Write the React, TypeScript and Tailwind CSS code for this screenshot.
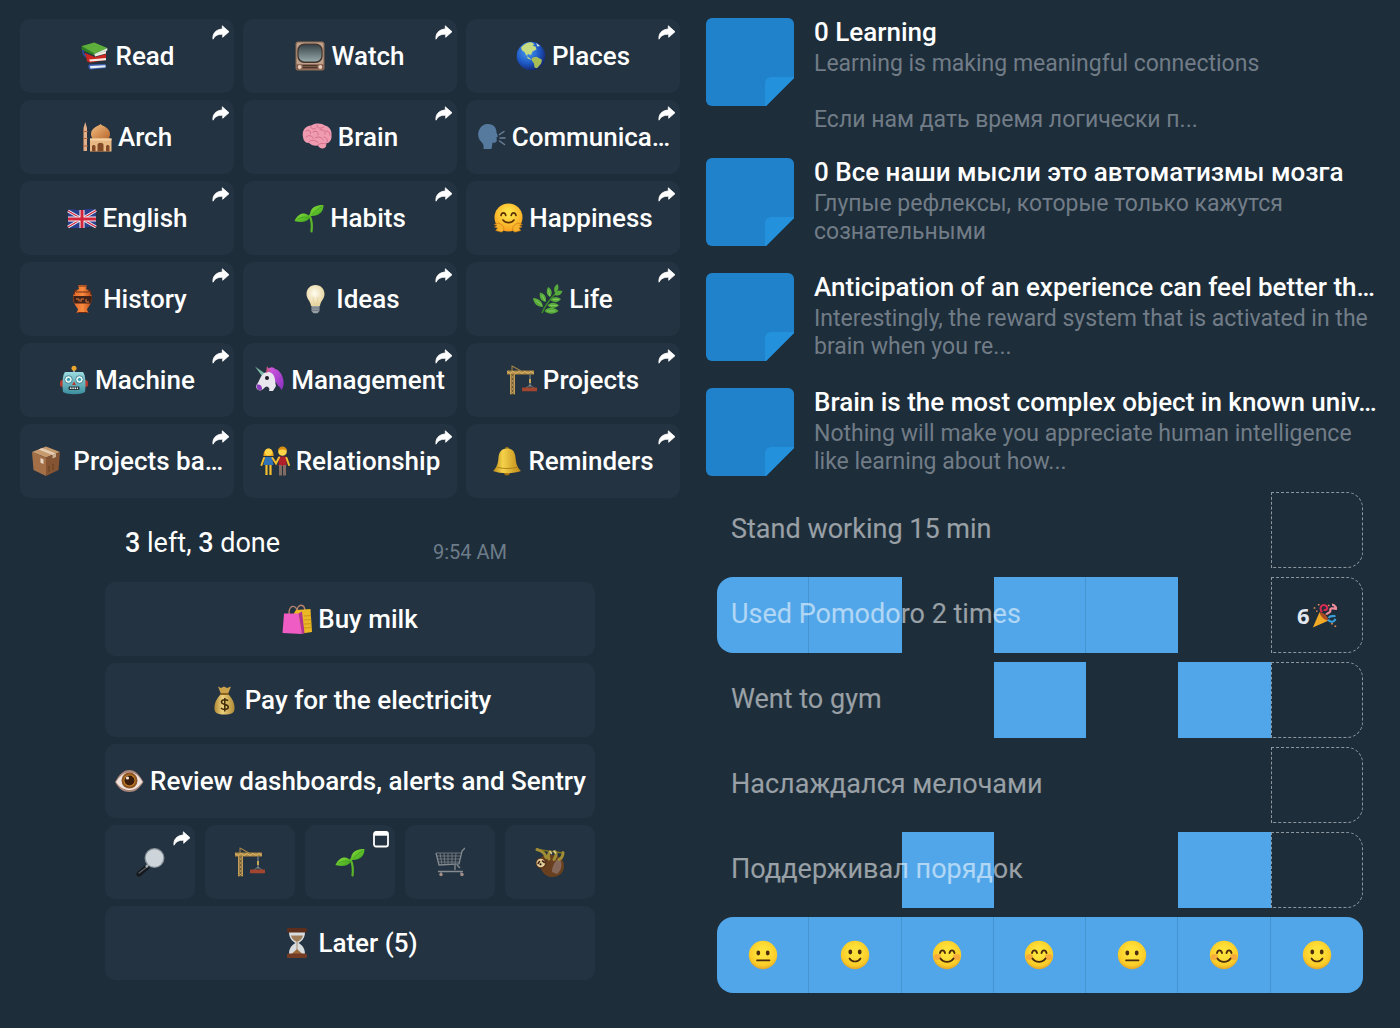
import React from "react";
import clsx from "clsx";

const Defs = () => (
  <svg className="absolute size-0" aria-hidden="true">
    <defs>
      <radialGradient id="face" cx="50%" cy="40%" r="60%">
        <stop offset="0.3" stopColor="#fee23a" />
        <stop offset="0.8" stopColor="#fbcb27" />
        <stop offset="1" stopColor="#dfa42b" />
      </radialGradient>
      <radialGradient id="hugFace" cx="50%" cy="35%" r="65%">
        <stop offset="0.2" stopColor="#ffdf45" />
        <stop offset="1" stopColor="#f89e1c" />
      </radialGradient>
      <radialGradient id="ocean" cx="38%" cy="35%" r="70%">
        <stop offset="0" stopColor="#4b9df0" />
        <stop offset="0.6" stopColor="#1d57c4" />
        <stop offset="1" stopColor="#14246b" />
      </radialGradient>
      <radialGradient id="glass" cx="45%" cy="40%" r="60%">
        <stop offset="0" stopColor="#fffdf0" />
        <stop offset="1" stopColor="#e6d29c" />
      </radialGradient>
      <linearGradient id="screen" x1="0" y1="0" x2="0" y2="1">
        <stop offset="0" stopColor="#38444a" />
        <stop offset="1" stopColor="#97a8a9" />
      </linearGradient>
      <linearGradient id="dome" x1="0" y1="0" x2="1" y2="1">
        <stop offset="0" stopColor="#f6c084" />
        <stop offset="1" stopColor="#b8692c" />
      </linearGradient>
      <linearGradient id="leaf" x1="0" y1="0" x2="1" y2="1">
        <stop offset="0" stopColor="#8ee23c" />
        <stop offset="1" stopColor="#35a01b" />
      </linearGradient>
      <linearGradient id="gold" x1="0" y1="0" x2="1" y2="0">
        <stop offset="0" stopColor="#b98718" />
        <stop offset="0.35" stopColor="#f5d24a" />
        <stop offset="1" stopColor="#bd8716" />
      </linearGradient>
      <linearGradient id="sack" x1="0" y1="0" x2="1" y2="0">
        <stop offset="0" stopColor="#b08a35" />
        <stop offset="0.4" stopColor="#ecd07c" />
        <stop offset="1" stopColor="#b08a35" />
      </linearGradient>
      <linearGradient id="robot" x1="0" y1="0" x2="0" y2="1">
        <stop offset="0" stopColor="#9bdbe0" />
        <stop offset="1" stopColor="#3b8d9d" />
      </linearGradient>
      <linearGradient id="clay" x1="0" y1="0" x2="1" y2="0">
        <stop offset="0" stopColor="#e0662a" />
        <stop offset="0.5" stopColor="#f98a3e" />
        <stop offset="1" stopColor="#b74818" />
      </linearGradient>
      <linearGradient id="mane" x1="0" y1="0" x2="1" y2="1">
        <stop offset="0" stopColor="#d75de0" />
        <stop offset="1" stopColor="#8a2fc0" />
      </linearGradient>
    </defs>
  </svg>
);

const drawings: Record<string, React.ReactNode> = {
  books: (
    <>
      <path d="M9 23.500l16.500-.5.500 4-16 1.500c-2-1.500-2-3.500-1-5Z" fill="#3f63b5" />
      <path d="M10 25l15.500-.8v2L10.500 27.500Z" fill="#e8eef5" />
      <path d="M5 12l10 4 11-3v6l-16 2.800C6.500 20.500 6 19 7 17.500 4.500 16 4 14 5 12Z" fill="#c9271f" />
      <path d="M9 18.500l17-1.500v2.200l-16 1.300Z" fill="#f4ece2" />
      <path d="M15 13.500l11-3.500v2.500l-11 3Z" fill="#f4ece2" />
      <path d="M1.700 5 14.300 1.500 27.300 7 14.300 13 3 8.500Z" fill="#5dae3a" />
      <path d="M1.700 5v4l12.600 5.500V12.500Z" fill="#2e7d26" />
      <path d="M14.300 13l13-6v2.500l-13 5Z" fill="#dcebd4" />
      <path d="M3 9c-.5 3 .5 5 3 6.500" fill="none" stroke="#2f4aa0" strokeWidth="1.500" />
    </>
  ),
  tv: (
    <>
      <rect x=".5" y=".5" width="29" height="29" rx="2.500" fill="#8d6a55" />
      <rect x="1.600" y="1.600" width="26.800" height="26.800" rx="2" fill="#bfa08a" />
      <rect x="2.300" y="2.500" width="25.400" height="19.500" rx="7" fill="#41352e" />
      <rect x="3.600" y="3.800" width="22.800" height="16.800" rx="6" fill="url(#screen)" />
      <path d="M1.500 23.300H28.500V28.500H1.500Z" fill="#7b5747" />
      <path d="M8 24.500H22M8 26.500H22" stroke="#4a342a" strokeWidth="1" />
      <circle cx="4.700" cy="26" r="2" fill="#e8cdb8" />
      <circle cx="25.300" cy="26" r="2" fill="#e8cdb8" />
    </>
  ),
  globe: (
    <>
      <circle cx="15" cy="15" r="14.300" fill="url(#ocean)" />
      <path d="M5 6.500C8 2.500 12 1 15.500 1.200l3 2-2 1.500 3 .8 1 3-4 2-1.500 3.500-3-1-1.500 2 3 2 2.500 2-4-1.200L8.500 11 6 9.500Z" fill="#c5dc83" />
      <path d="M16.500 16.500l4-.8 5.500 3-1 4-4 4.500-2.500-.7-.5-4-2.500-3.500Z" fill="#a9bd55" />
      <path d="M20 2l4 3-2.500.5Z" fill="#e5efd8" />
    </>
  ),
  mosque: (
    <>
      <path d="M3.300 0 5 6V29H1.500V6Z" fill="#e5ad86" />
      <path d="M1 9.500H5.800M1 16.500H5.800M1 24H5.800" stroke="#a9633f" strokeWidth="1.200" />
      <path d="M18.500 2c1.500 2 9.500 3.500 9.500 10 0 2.500-1 4-2 5H11c-1-1-2-2.500-2-5C9 5.500 17 4 18.500 2Z" fill="url(#dome)" />
      <path d="M8 16.500H29.500V29.500H8Z" fill="#e8b884" />
      <path d="M8 16.500H29.500v2H8Z" fill="#f6d3a4" />
      <path d="M15.500 29.500V23c0-3 6-3 6 0v6.500ZM10 29.500v-5c0-2 3.500-2 3.500 0v5ZM24 29.500v-5c0-2 3.500-2 3.500 0v5Z" fill="#824a26" />
    </>
  ),
  brain: (
    <>
      <path d="M1 15C-.5 8 4 4 9 3.500 13 .5 20 1 23 3.500c5 1.500 7 5.500 6.500 9.500.5 5-2 8-5.500 8.500 1 3-1 5-3.500 5-2.500 0-4-1.500-4.500-3-4 .5-7-.5-9-2.500C3.500 21 1.500 19 1 15Z" fill="#f09bb0" />
      <path d="M4 9c3-2 5 0 4.500 2.500M9 4c-1 3 3 4 5 2M15 3c0 4 5 4 7 1.500M4 15c2-2 6-2 7 1M11 10c3-2 6 0 5 3M18 8c3-1 6 1 5 4M13 16c3-2 7-1 8 2M24 9c2 0 4 1 4 4M7 20c2-3 6-2 9 .5M22 15c2 0 4 2 3 5M16 23c2-2 5-2 8-1" fill="none" stroke="#d3708c" strokeWidth="1" strokeLinecap="round" />
    </>
  ),
  speaking: (
    <>
      <path d="M11 2c6.500-.5 9.500 3.500 9.500 8.500L22 14.500l-1.500.8.3 3.200c0 2-2 2.500-4.300 2.300L15.500 27H7.500c.5-4-.5-5.500-3-8C-1 12 4 2.500 11 2Z" fill="#56799e" />
      <path d="M23.500 12.500l4.500-3M24 16h5M23.500 19l5 3.500" stroke="#6c8199" strokeWidth="1.500" strokeLinecap="round" />
    </>
  ),
  flag: (
    <>
      <path d="M1 7C6 5.500 10 8 15 7s9-1.500 14-.5V24c-5-1-9 .5-14 1S6 24 1 25Z" fill="#2b3f8f" />
      <path d="M1 8l28 16M29 7.500 1 24" stroke="#f2f2f5" strokeWidth="3" />
      <path d="M1 8l28 16M29 7.500 1 24" stroke="#d2253c" strokeWidth="1.200" />
      <path d="M15 7v18M1 16H29" stroke="#f2f2f5" strokeWidth="5" />
      <path d="M15 7v18M1 16H29" stroke="#d2253c" strokeWidth="3" />
    </>
  ),
  sprout: (
    <>
      <path d="M17.500 28.500C18.400 22 17.600 17 15.600 12.500" fill="none" stroke="#5bb52a" strokeWidth="2.200" strokeLinecap="round" />
      <path d="M16 14.500C12 8 4 10 .5 18c6.500 2 12.500 1.500 15.500-3.500Z" fill="url(#leaf)" />
      <path d="M16 13C15.500 4.500 22 2 29.500 2 29.500 9 25 13.500 16 13Z" fill="url(#leaf)" />
      <path d="M3 16.500c4-2.500 8-3 12-2M18 11.500c3-3 6-5.500 10-8" fill="none" stroke="#3f9a1e" strokeWidth=".7" />
    </>
  ),
  hug: (
    <>
      <circle cx="15.500" cy="14.500" r="14" fill="url(#hugFace)" />
      <path d="M8 12.500c.8-3.500 4-3.500 4.800 0M18.200 12.500c.8-3.500 4-3.500 4.800 0M10 17c2.500 3.500 8.500 3.500 11 0" fill="none" stroke="#5b3207" strokeWidth="1.600" strokeLinecap="round" />
      <path d="M1 21.500l3 1-2.500 1.500L4.500 25l-1.800 2.500L8 29c3 .5 4-5 1-7L6 20Z" fill="#f7b22c" stroke="#c27313" strokeWidth=".6" />
      <path d="M29.500 21.500l-3 1 2.500 1.500-3 1 1.800 2.500L22.500 29c-3 .5-4-5-1-7l3-2Z" fill="#f7b22c" stroke="#c27313" strokeWidth=".6" />
    </>
  ),
  vase: (
    <>
      <path d="M11 1h9l-1 4c4 2 6.500 6 6 10-.5 5-4 8-5 10.500l1.500 3.500h-12L11 25.500C10 23 6.500 20 6 15c-.5-4 2-8 6-10Z" fill="url(#clay)" />
      <path d="M6.300 12H24.700c.3 3 0 5-1.200 7.500H7.500C6.500 17 6 15 6.300 12Z" fill="#402218" />
      <path d="M9 15h3v2.500M14 18v-3h3M19 15v3h3" stroke="#d87a42" strokeWidth="1" fill="none" />
      <path d="M11 2h9M10.500 28.500h10M9 8h13" stroke="#6e2c14" strokeWidth="1.200" />
      <path d="M10 5.500c-3 1-3 4-2.500 5M21 5.500c3 1 3 4 2.500 5" stroke="#6e2c14" strokeWidth="1.200" fill="none" />
    </>
  ),
  bulb: (
    <>
      <path d="M15.500 1C21 1 24.500 5 24.500 10c0 5-4 7-4.500 12h-9C10.500 17 6.500 15 6.500 10c0-5 3.500-9 9-9Z" fill="url(#glass)" />
      <path d="M13 13l1.500 8M18 13l-1.500 8" stroke="#e5cf94" strokeWidth=".7" />
      <path d="M11.500 22h8v5l-2 2.300h-4l-2-2.300Z" fill="#98a0a5" />
      <path d="M11.500 24h8M11.500 26.300h8" stroke="#5f676d" strokeWidth=".8" />
    </>
  ),
  herb: (
    <>
      <path d="M9 29C12 21 16 16 24 8" stroke="#3b8a2a" strokeWidth="1.500" fill="none" />
      <path
        d="M22 9c-2-4-.5-7.500 2.500-9 2 3.500 1 7-2.500 9ZM17 13c-4-2-4-6-2-10 4 2 5 6 2 10ZM12.500 18c-5-1-6.500-5-5.500-9.500 5 1 7 5 5.500 9.500ZM10 23C4 23 .5 19 0 14c6 0 9.500 3.500 10 9ZM21.500 11c1-4 4.500-5.500 8-4-1.500 4-4 5.500-8 4ZM17.500 16c3-4 7-3.500 10.500-1-3 4-7 4-10.500 1ZM14.500 21.500c3-4 8-3.500 11.500 0-3.500 3-8 3.500-11.500 0ZM11.500 27c3-4.500 10-4 14 0-4.500 3.500-10 3.500-14 0Z"
        fill="#57ab3b"
      />
      <path d="M2.500 16l6.500 5.500M9 11l3 6M15.500 6l1.500 6M17 21.500h7M14 27h8M20 15.500h6" stroke="#92cf68" strokeWidth=".8" />
    </>
  ),
  robot: (
    <>
      <rect x="1" y="15" width="28" height="7" rx="2.500" fill="#b5392e" />
      <path d="M15 4v4" stroke="#8b9ba0" strokeWidth="2" />
      <circle cx="15" cy="3.300" r="2.500" fill="#eda62c" />
      <path d="M6 7H24c2.500 3 3 12 2 20-4 3-18 3-22 0C3 19 3.500 10 6 7Z" fill="url(#robot)" />
      <circle cx="9.500" cy="14.500" r="3.800" fill="#e9f8f8" stroke="#2c7180" strokeWidth=".8" />
      <circle cx="20.500" cy="14.500" r="3.800" fill="#e9f8f8" stroke="#2c7180" strokeWidth=".8" />
      <circle cx="9.500" cy="14.500" r="1.700" fill="#3ba0b4" />
      <circle cx="20.500" cy="14.500" r="1.700" fill="#3ba0b4" />
      <path d="M15 16.500l2 3.500h-4Z" fill="#b5392e" />
      <rect x="9.500" y="21.500" width="11" height="3.500" rx="1.200" fill="#26373c" />
      <path d="M11 23.300h8" stroke="#e8eeee" strokeWidth="1.400" strokeDasharray="1.500 .8" />
    </>
  ),
  unicorn: (
    <>
      <path d="M12 5c3-4 7-3 8-1 5 1 8 7 8.500 12 .5 4-.5 7-2 9-1-3-4-4-5-7L13 9Z" fill="url(#mane)" />
      <path d="M0 1.500l10 7-3 2.500Z" fill="#7cb9a8" />
      <path d="M8 9c4-3.500 9-2 11 2 1.500 3 1 7 2 10l-3 5h-4c1-2 0-4-2-4.500-3 .5-4 4-7 4-3-.5-4.500-3-3.500-5.500C4 17 5 12 8 9Z" fill="#e8e5ee" />
      <path d="M1.800 19.500C5 19 7.500 21 7 24.500c-2.500 2-6 0-5.200-5Z" fill="#8d3bbf" />
      <path d="M12 1l3.500 5L11 8Z" fill="#d0588f" />
      <circle cx="12" cy="13" r="2" fill="#1c1c22" />
    </>
  ),
  crane: (
    <>
      <path d="M3 6.500H8V29.500H3Z" fill="#6d5a37" />
      <path d="M3.500 7V29M7.500 7V29M3.500 10l4 4-4 4 4 4-4 4 4 3M7.500 10l-4 4 4 4-4 4 4 4-4 3" fill="none" stroke="#c8a35a" strokeWidth=".9" />
      <path d="M0 5.500H27V9.500H0Z" fill="#b08b45" />
      <path d="M0 6.500l3 2 3-2 3 2 3-2 3 2 3-2 3 2 3-2 3 2" fill="none" stroke="#e3c077" strokeWidth=".8" />
      <path d="M5 .5V6M5 1l9 5" stroke="#a58448" strokeWidth="1.100" fill="none" />
      <path d="M23 9.500V22" stroke="#8b9499" strokeWidth="1" />
      <path d="M23 14v4" stroke="#c9a452" strokeWidth="2" />
      <path d="M19 23l4-3 4 3" stroke="#8b9499" strokeWidth=".8" fill="none" />
      <rect x="15" y="22.500" width="15" height="3.800" rx=".6" fill="#a3452f" />
    </>
  ),
  box: (
    <>
      <path d="M15 .5 29 6 15 11.500 1 6Z" fill="#c79a6d" />
      <path d="M1 6l14 5.500V30L2.500 24Z" fill="#a36f46" />
      <path d="M29 6 15 11.500V30l12.500-6Z" fill="#855433" />
      <path d="M7.500 3.500 11 2 25 7.500 21.500 9Z" fill="#e4cdb3" />
      <path d="M21.500 9 25 7.500V11l-3.500 1.500Z" fill="#cbb08f" />
      <path d="M9.500 12l3 1.500V18l-3-1.300Z" fill="#e7d8c7" />
      <path d="M18 20v6M22 18v6" stroke="#69401f" strokeWidth="1" />
    </>
  ),
  couple: (
    <>
      <path d="M5 11h7l1.500 8h-10Z" fill="#3173b5" />
      <path d="M19 10.500h7.500V20H18.500Z" fill="#b01e2a" />
      <path d="M4 12 1.500 19M12.500 12l3.500 5.500 3-6M26.500 12l2.500 7" stroke="#f4bf2f" strokeWidth="2" fill="none" strokeLinecap="round" />
      <path d="M6.500 19v10M10.500 19v10" stroke="#f4bf2f" strokeWidth="2.200" />
      <path d="M20.500 19v10.500M24.500 19v10.500" stroke="#806b63" strokeWidth="3" />
      <path d="M3.500 10C3 1 14 0 13.500 10Z" fill="#eda51d" />
      <circle cx="8.500" cy="6" r="3.600" fill="#ffd447" />
      <circle cx="22.500" cy="5.500" r="4.300" fill="#ffd447" />
      <path d="M18 5c0-6 9-6 9 0-2-2-7-2-9 0Z" fill="#d98f13" />
    </>
  ),
  bell: (
    <>
      <circle cx="15" cy="2.800" r="2" fill="#8c6d1d" />
      <circle cx="15" cy="26.500" r="3" fill="#9b6c10" />
      <path d="M15 2.500c6 0 8 4 8.500 9 .5 7 2 10 5.500 13.500-8 3-20 3-28 0C4.500 21.500 6 18.500 6.500 11.500 7 6.500 9 2.500 15 2.500Z" fill="url(#gold)" />
      <path d="M4.500 21c6 2 15 2 21 0" stroke="#9c7312" strokeWidth=".8" fill="none" />
    </>
  ),
  bags: (
    <>
      <path d="M15 8c0-9 8-9 8 0M7 10C7 0 15 0 15.500 9" fill="none" stroke="#b9856e" strokeWidth="1.300" />
      <path d="M14 6 28.500 5l1.500 23-10 1.500L12 9Z" fill="#e9b824" />
      <path d="M22 12l7-.4M22 16l7.200-.4M22 20l7.400-.4M22 24l7.500-.4" stroke="#c9901a" strokeWidth=".9" />
      <path d="M2 9.500H16.500L20 30 .5 29Z" fill="#ef5cc4" />
      <path d="M16.500 9.500 20 7.500l2.500 21.500-2.500 1Z" fill="#b23391" />
    </>
  ),
  money: (
    <>
      <path d="M9 1.500 12 3l3-1.500L18 3l4-1.500L19 9H12Z" fill="#caa24c" />
      <path d="M12 9h7c4 4 7 9 6.500 15-.3 4-3 5.500-10 5.500S5.800 28 5.500 24C5 18 8 13 12 9Z" fill="url(#sack)" />
      <path d="M11.500 9h8" stroke="#7c5515" strokeWidth="1.700" />
      <path d="M19 15.700c-1.500-1.500-6.500-1.300-6.500 1.300 0 3.200 6.800 1.700 6.800 5 0 2.800-5.300 3.200-7.300 1M15.800 13v13.500" fill="none" stroke="#3f2c0a" strokeWidth="1.500" />
    </>
  ),
  eye: (
    <>
      <path d="M1 16C6 7 10 4 15.500 4 21 4 25 8 29.500 16 25 23 21 26 15.500 26 9 26 5 23 1 16Z" fill="#a88578" />
      <path d="M2 16C6 9.500 10 6.500 15.500 6.500S25 9.500 28.500 16C24 22 20 24 15.500 24S6 22 2 16Z" fill="#eee2dd" />
      <circle cx="15.500" cy="14.500" r="8" fill="#8b5422" />
      <circle cx="15.500" cy="14.500" r="6" fill="#c98328" />
      <circle cx="15.500" cy="14.500" r="5" fill="#3a1c0c" />
      <circle cx="13.500" cy="12" r="1.600" fill="#f3e7df" />
    </>
  ),
  magnifier: (
    <>
      <path d="M12 20 4 27" stroke="#15191d" strokeWidth="5" strokeLinecap="round" />
      <path d="M12.500 19.500 4 26" stroke="#596067" strokeWidth="1.200" strokeLinecap="round" />
      <path d="M14 17l-3 3" stroke="#a5acb2" strokeWidth="2.500" />
      <circle cx="19.500" cy="11" r="10" fill="#8c949b" />
      <circle cx="19.500" cy="11" r="8.700" fill="#cdd4da" />
    </>
  ),
  cart: (
    <>
      <path d="M1 6l3 12 20-1L27 4l3-3" fill="none" stroke="#858b91" strokeWidth="1.300" />
      <path d="M1 6H26M2 9H25.500M3 12H25M3.500 15H24.500M5 6l2 12M9 6l1 12M13 6v12M17 6v12M21 6l-1 12" stroke="#7d8389" strokeWidth=".8" fill="none" />
      <path d="M22 18l3 3M3 24.500H28M20 18v5" stroke="#858b91" strokeWidth="1.300" />
      <path d="M6 24v3M26 24v3" stroke="#858b91" strokeWidth="1" />
      <circle cx="6" cy="27.500" r="1.700" fill="#a5908a" />
      <circle cx="27" cy="27.500" r="1.700" fill="#a5908a" />
    </>
  ),
  sloth: (
    <>
      <path d="M5 13C6 8 12 7 17 8c7 0 12 4 12 11s-5 11-12 11C9 30 4 22 5 13Z" fill="#68401f" />
      <path d="M17 25c0-6 3-11 7-14 4 5 3 12-2 16Z" fill="#85675a" />
      <path d="M2 2.500 28 6" stroke="#7d7320" strokeWidth="1.600" strokeLinecap="round" />
      <path d="M2 2.500c4 1 8 3 9 8M15 5c-2 2-2 4-1 7M20 4.500c2 2 1 5-1 8M28 5.500c0 4-2 6-4 7" fill="none" stroke="#a08c33" strokeWidth="3" strokeLinecap="round" />
      <path d="M15 4.500l1.500 2M19 4l1.500 2" stroke="#ddd09c" strokeWidth="1.400" strokeLinecap="round" />
      <circle cx="6.300" cy="16" r="5.500" fill="#5c3619" />
      <circle cx="5.800" cy="16" r="4.300" fill="#e3cf9b" />
      <path d="M3 16.500l1.500-2M7.500 14l2 1.500" stroke="#432512" strokeWidth="1.600" strokeLinecap="round" />
      <circle cx="5.500" cy="17.300" r="1.100" fill="#2a1710" />
    </>
  ),
  hourglass: (
    <>
      <path d="M7 4H23c0 6-3 9-6.500 11C20 17 23 20 23 26H7c0-6 3-9 6.500-11C10 13 7 10 7 4Z" fill="#d8dcdf" />
      <path d="M9 7.500h12c-.7 3-2.500 5-6 6.500-3.500-1.500-5.500-3.500-6-6.500Z" fill="#9f7d59" />
      <path d="M15 21l6 5.500H9Z" fill="#9b6a3a" />
      <path d="M15 14v8" stroke="#a17c56" strokeWidth=".8" />
      <rect x="5" y="0" width="20" height="4.500" rx="1.600" fill="#5d2e1c" />
      <rect x="5" y="25.500" width="20" height="4.500" rx="1.600" fill="#743b24" />
    </>
  ),
  party: (
    <>
      <path d="M9 11 1 29.500 20 21Z" fill="#f0aa26" />
      <path d="M9 11c5 0 10 5 11 10-5 0-10-5-11-10Z" fill="#a84b22" />
      <path d="M20 18c2-4 6-1 8-3M19 20c4 4 8 3 9-1" fill="none" stroke="#3a9edb" strokeWidth="2.600" />
      <path d="M12 11c-4-5 0-10 4-8s2 7-2 5" fill="none" stroke="#d92b52" strokeWidth="2.500" />
      <path d="M17 14c1-3 6-2 5-5s3-3 6-2-.5-5-4-5" fill="none" stroke="#f08c9c" strokeWidth="2.600" />
      <path d="M2 6h2M7 2h2M19 3h2M23 25h2M27 28h2M5 10h1.500" stroke="#eb8a54" strokeWidth="1.800" />
    </>
  ),
  neutral: (
    <>
      <circle cx="15" cy="15" r="14.200" fill="url(#face)" />
      <ellipse cx="10.300" cy="13" rx="1.900" ry="2.400" fill="#4b2c0c" />
      <ellipse cx="19.700" cy="13" rx="1.900" ry="2.400" fill="#4b2c0c" />
      <path d="M9 20.300h12.500" stroke="#4b2c0c" strokeWidth="1.700" strokeLinecap="round" />
    </>
  ),
  smile: (
    <>
      <circle cx="15" cy="15" r="14.200" fill="url(#face)" />
      <ellipse cx="10.300" cy="12" rx="1.900" ry="2.400" fill="#4b2c0c" />
      <ellipse cx="19.700" cy="12" rx="1.900" ry="2.400" fill="#4b2c0c" />
      <path d="M9.500 18.500c2.500 4 8.500 4 11 0" fill="none" stroke="#4b2c0c" strokeWidth="1.700" strokeLinecap="round" />
    </>
  ),
  blush: (
    <>
      <circle cx="15" cy="15" r="14.200" fill="url(#face)" />
      <ellipse cx="5.500" cy="17" rx="3.500" ry="3" fill="#f4864a" opacity=".5" />
      <ellipse cx="24.500" cy="17" rx="3.500" ry="3" fill="#f4864a" opacity=".5" />
      <path d="M8 13c.8-3.500 4.200-3.500 5 0M17.500 13c.8-3.500 4.200-3.500 5 0" fill="none" stroke="#4b2c0c" strokeWidth="1.900" strokeLinecap="round" />
      <path d="M8.500 18.500c3 4.500 10 4.500 13 0" fill="none" stroke="#4b2c0c" strokeWidth="1.900" strokeLinecap="round" />
    </>
  ),
};

const Emoji = ({ name, className = "size-[30px]" }: { name: string; className?: string }) => (
  <svg viewBox="0 0 30 30" aria-hidden="true" className={clsx("shrink-0", className)}>
    {drawings[name]}
  </svg>
);

const ShareArrow = () => (
  <svg viewBox="0 0 18 15" aria-hidden="true" className="absolute top-1.5 right-1 h-[15px] w-[18px]">
    <path
      d="M10.300.8 17 6.700 10.700 12.300V9.300C6 9 3 10.500 1 14.200.300 9 3.500 4.500 10.300 4Z"
      fill="#fff"
      stroke="#fff"
      strokeWidth=".8"
      strokeLinejoin="round"
    />
  </svg>
);

const WindowMark = () => (
  <svg viewBox="0 0 16 17" aria-hidden="true" className="absolute top-1.5 right-1.5 h-[17px] w-4">
    <rect x="1" y="1" width="14" height="14.500" rx="2" fill="none" stroke="#fff" strokeWidth="1.800" />
    <path d="M1 3H15" stroke="#fff" strokeWidth="3.400" />
  </svg>
);

type KeyProps = { icon: string; label?: string; name?: string; mark?: "share" | "window" };

const Key = ({ icon, label, name, mark }: KeyProps) => (
  <button
    type="button"
    aria-label={name}
    className="relative flex h-[74px] w-full min-w-0 cursor-pointer items-center justify-center gap-1.5 rounded-[10px] bg-[#233341] text-[26px] leading-8 font-medium whitespace-nowrap text-white hover:bg-[#2a3c4c]"
  >
    <Emoji name={icon} />
    {label && <span>{label}</span>}
    {mark === "share" && <ShareArrow />}
    {mark === "window" && <WindowMark />}
  </button>
);

const topics = [
  { icon: "books", label: "Read" },
  { icon: "tv", label: "Watch" },
  { icon: "globe", label: "Places" },
  { icon: "mosque", label: "Arch" },
  { icon: "brain", label: "Brain" },
  { icon: "speaking", label: "Communica…" },
  { icon: "flag", label: "English" },
  { icon: "sprout", label: "Habits" },
  { icon: "hug", label: "Happiness" },
  { icon: "vase", label: "History" },
  { icon: "bulb", label: "Ideas" },
  { icon: "herb", label: "Life" },
  { icon: "robot", label: "Machine" },
  { icon: "unicorn", label: "Management" },
  { icon: "crane", label: "Projects" },
  { icon: "box", label: "\u00a0Projects ba…" },
  { icon: "couple", label: "Relationship" },
  { icon: "bell", label: "Reminders" },
];

const notes = [
  { title: "0 Learning", lines: ["Learning is making meaningful connections", "", "Если нам дать время логически п..."] },
  { title: "0 Все наши мысли это автоматизмы мозга", lines: ["Глупые рефлексы, которые только кажутся", "сознательными"] },
  {
    title: "Anticipation of an experience can feel better th…",
    lines: ["Interestingly, the reward system that is activated in the", "brain when you re..."],
  },
  {
    title: "Brain is the most complex object in known univ…",
    lines: ["Nothing will make you appreciate human intelligence", "like learning about how..."],
  },
];

const habits = [
  { name: "Stand working 15 min", done: [] as number[] },
  { name: "Used Pomodoro 2 times", done: [0, 1, 3, 4], streak: 6 },
  { name: "Went to gym", done: [3, 5] },
  { name: "Наслаждался мелочами", done: [] },
  { name: "Поддерживал порядок", done: [2, 5] },
];

const moods = ["neutral", "smile", "blush", "blush", "neutral", "blush", "smile"];

const NoteIcon = () => (
  <svg viewBox="0 0 88 88" aria-hidden="true" className="mt-0.5 size-[88px] shrink-0">
    <path d="M6 0H82a6 6 0 0 1 6 6V60L60 88H6a6 6 0 0 1-6-6V6a6 6 0 0 1 6-6Z" fill="#1f82ca" />
    <path d="M88 60 60 88H59V65a6 6 0 0 1 6-6H88Z" fill="#2391db" />
  </svg>
);

const Topics = () => (
  <div className="grid grid-cols-3 gap-x-[9px] gap-y-[7px]">
    {topics.map((topic) => (
      <Key key={topic.icon} {...topic} mark="share" />
    ))}
  </div>
);

const Todo = () => (
  <div className="mx-auto mt-7 w-full max-w-[490px]">
    <div className="flex items-end justify-between pr-[88px] pb-[22px] pl-5">
      <p className="text-[27px] leading-[34px] text-white">
        <b className="font-medium">3</b> left, <b className="font-medium">3</b> done
      </p>
      <time className="text-[20px] leading-4 text-[#6d7c89]">9:54 AM</time>
    </div>
    <div className="flex flex-col gap-[7px]">
      <Key icon="bags" label="Buy milk" />
      <Key icon="money" label="Pay for the electricity" />
      <Key icon="eye" label="Review dashboards, alerts and Sentry" />
      <div className="grid grid-cols-5 gap-2.5">
        <Key icon="magnifier" name="Search" mark="share" />
        <Key icon="crane" name="Projects" />
        <Key icon="sprout" name="Habits" mark="window" />
        <Key icon="cart" name="Shopping" />
        <Key icon="sloth" name="Lazy" />
      </div>
      <Key icon="hourglass" label="Later (5)" />
    </div>
  </div>
);

const Notes = () => (
  <ul className="flex flex-col gap-[22px]">
    {notes.map((note) => (
      <li key={note.title} className="flex min-h-[93px] gap-5">
        <NoteIcon />
        <div className="min-w-0">
          <h2 className="mb-0.5 text-[26px] leading-8 font-medium whitespace-nowrap text-white">{note.title}</h2>
          {note.lines.map((line, i) => (
            <p key={i} className="h-7 text-[23px] leading-7 whitespace-nowrap text-[#717c87]">
              {line}
            </p>
          ))}
        </div>
      </li>
    ))}
  </ul>
);

const Habits = () => (
  <div className="mt-[13px] mr-1 ml-[11px] flex flex-col gap-[9px]">
    {habits.map((habit) => (
      <div key={habit.name} className="relative grid h-[76px] grid-cols-7">
        {[0, 1, 2, 3, 4, 5].map((day) => (
          <span
            key={day}
            className={clsx(
              day === 0 && "rounded-l-2xl",
              habit.done.includes(day) && "bg-[#51a6e9]",
              habit.done.includes(day) && habit.done.includes(day + 1) && "border-r border-[#4593cf]"
            )}
          />
        ))}
        <button
          type="button"
          aria-label={habit.name}
          className="flex cursor-pointer items-center justify-center gap-0.5 rounded-r-2xl border border-dashed border-[#8d979f] font-['Noto_Sans',sans-serif] text-[22px] font-bold text-[#e3e8f0]"
        >
          {habit.streak && (
            <>
              {habit.streak}
              <Emoji name="party" className="size-[25px]" />
            </>
          )}
        </button>
        <span className="pointer-events-none absolute inset-y-0 left-3.5 flex items-center pb-0.5 text-[27px] whitespace-nowrap text-white/55">
          {habit.name}
        </span>
      </div>
    ))}
    <div className="grid h-[76px] grid-cols-7 divide-x divide-[#4593cf] overflow-hidden rounded-2xl bg-[#51a6e9]">
      {moods.map((mood, i) => (
        <button key={i} type="button" aria-label={mood} className="flex cursor-pointer items-center justify-center">
          <Emoji name={mood} />
        </button>
      ))}
    </div>
  </div>
);

const App = () => {
  return (
    <main className="grid min-h-screen grid-cols-2 bg-[#1d2d3a] font-[Roboto,sans-serif]">
      <Defs />
      <section className="min-w-0 px-5 pt-[19px]">
        <Topics />
        <Todo />
      </section>
      <section className="min-w-0 pt-4 pr-[33px] pb-[35px] pl-1.5">
        <Notes />
        <Habits />
      </section>
    </main>
  );
};

export default App;
